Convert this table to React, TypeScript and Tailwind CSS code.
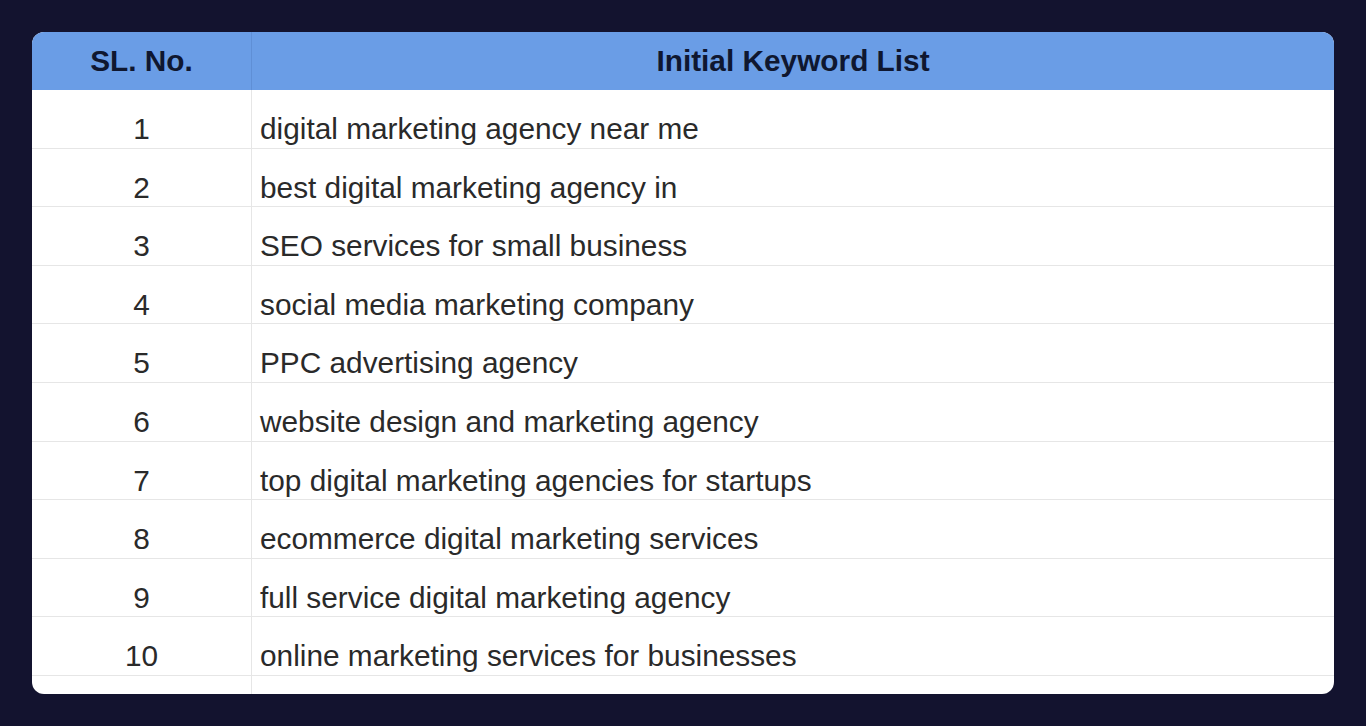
const keywords = [
  "digital marketing agency near me",
  "best digital marketing agency in",
  "SEO services for small business",
  "social media marketing company",
  "PPC advertising agency",
  "website design and marketing agency",
  "top digital marketing agencies for startups",
  "ecommerce digital marketing services",
  "full service digital marketing agency",
  "online marketing services for businesses",
];

export default function App() {
  return (
    <div className="min-h-[726px] w-full bg-[#13132f] p-8 font-['Liberation_Sans',Arial,sans-serif]">
      <div className="h-[662px] overflow-hidden rounded-xl bg-white">
        <div className="grid h-[58px] grid-cols-[220px_1fr] bg-[#6a9de6] text-[29.8px] font-bold text-[#0f1730]">
          <div className="flex items-center justify-center border-r border-[#5f8fd6]">SL. No.</div>
          <div className="flex items-center justify-center">Initial Keyword List</div>
        </div>
        {keywords.map((k, i) => (
          <div
            key={k}
            className="grid h-[58.6px] grid-cols-[220px_1fr] border-b border-[#e6e6e6] text-[29.8px] text-[#2a2a2a]"
          >
            <div className="flex items-center justify-center border-r border-[#e6e6e6] pt-[17px]">{i + 1}</div>
            <div className="flex items-center pl-2 pt-[17px]">{k}</div>
          </div>
        ))}
        <div className="grid h-[20px] grid-cols-[220px_1fr]">
          <div className="border-r border-[#e6e6e6]" />
          <div />
        </div>
      </div>
    </div>
  );
}
